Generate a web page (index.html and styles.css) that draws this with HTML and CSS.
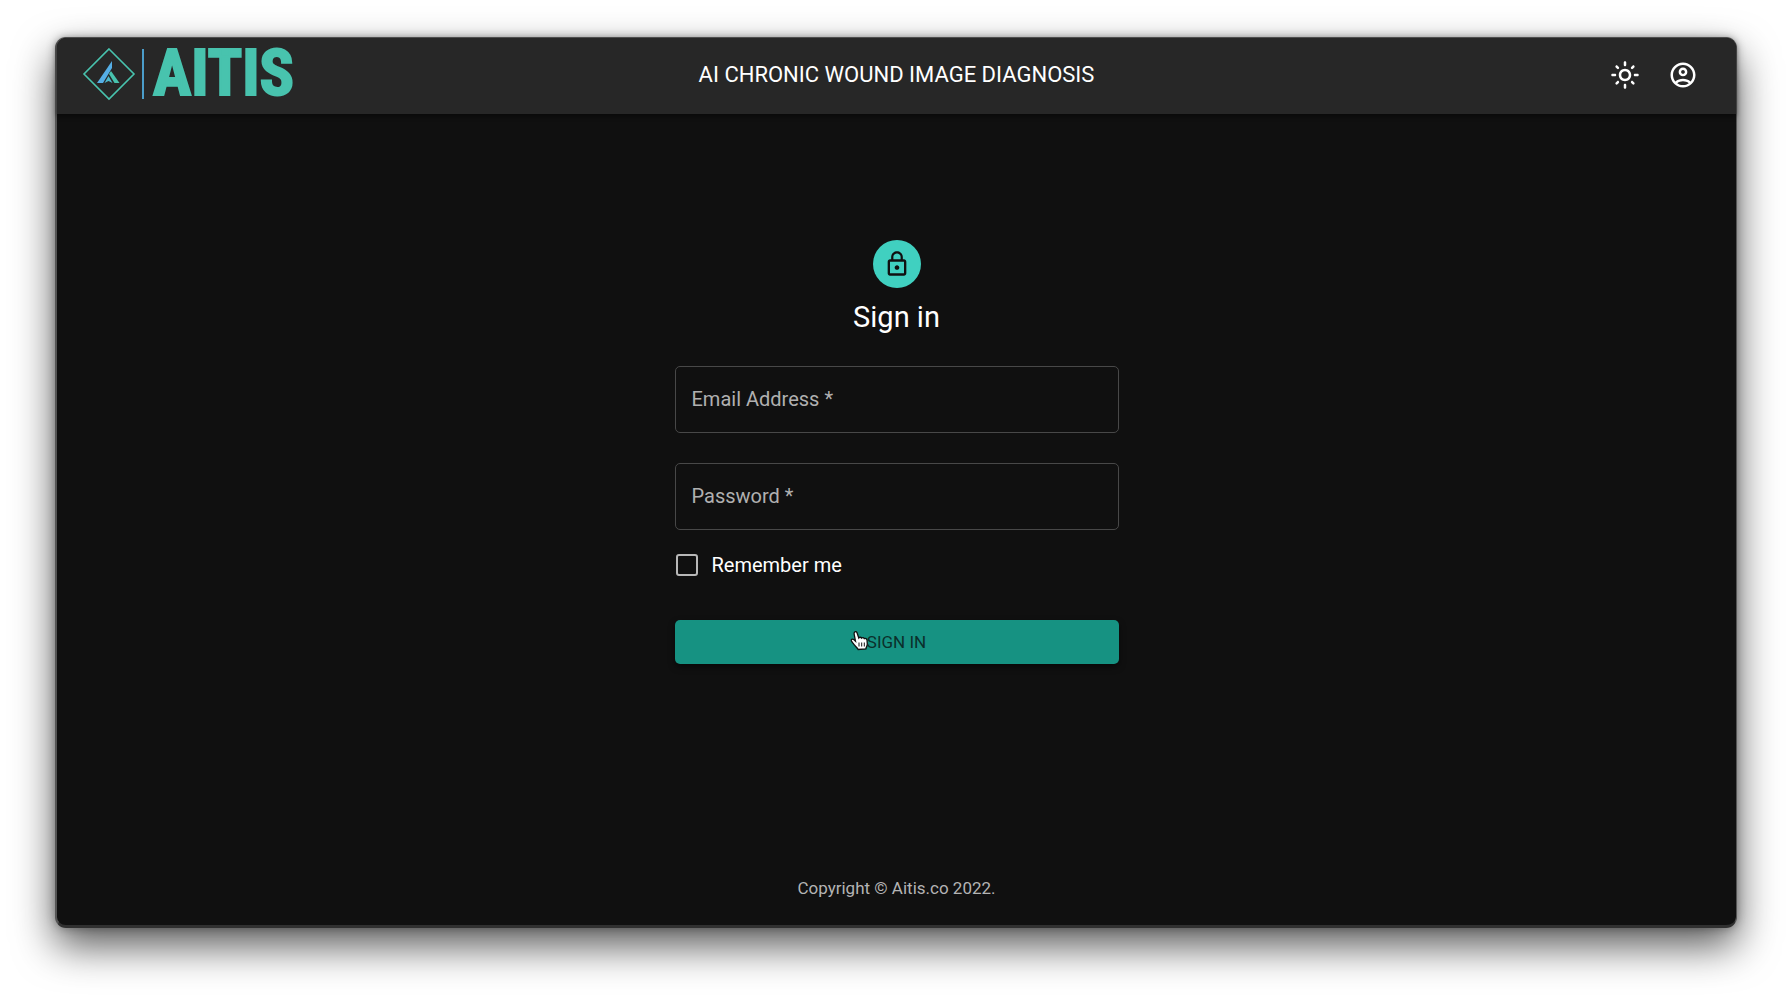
FILE: index.html
```html
<!DOCTYPE html>
<html lang="en">
<head>
<meta charset="utf-8">
<meta name="viewport" content="width=device-width, initial-scale=1">
<title>AI Chronic Wound Image Diagnosis</title>
<link rel="stylesheet" href="styles.css">
</head>
<body>
<div class="window">
  <header class="bar">
    <a class="brand" href="#" aria-label="AITIS home">
      <svg class="brand-mark" viewBox="0 0 54 54" aria-hidden="true">
        <path d="M27 2 52 27 27 52 2 27Z" fill="none" stroke="#48c3ae" stroke-width="1.6"/>
        <path d="M30 14v7L21 36h-6Z" fill="#55aee6"/>
        <path d="M29 24 37.500 36H32.500L27 27Z" fill="#48c3ae"/>
        <path d="M26.500 29 30.500 36 26.500 34 22.500 36Z" fill="#4cb8cb"/>
      </svg>
      <span class="brand-rule"></span>
      <span class="brand-name">AITIS</span>
    </a>
    <h1 class="bar-title">AI CHRONIC WOUND IMAGE DIAGNOSIS</h1>
    <nav class="actions">
      <button class="icon-button" type="button" aria-label="Toggle theme">
        <svg viewBox="0 0 24 24" aria-hidden="true"><path d="M12 9c1.650 0 3 1.350 3 3s-1.350 3-3 3-3-1.350-3-3 1.350-3 3-3m0-2c-2.760 0-5 2.240-5 5s2.240 5 5 5 5-2.240 5-5-2.240-5-5-5zM2 13h2c.55 0 1-.45 1-1s-.45-1-1-1H2c-.55 0-1 .45-1 1s.45 1 1 1zm18 0h2c.55 0 1-.45 1-1s-.45-1-1-1h-2c-.55 0-1 .45-1 1s.45 1 1 1zM11 2v2c0 .55.45 1 1 1s1-.45 1-1V2c0-.55-.45-1-1-1s-1 .45-1 1zm0 18v2c0 .55.45 1 1 1s1-.45 1-1v-2c0-.55-.45-1-1-1s-1 .45-1 1zM5.990 4.580c-.39-.39-1.030-.39-1.410 0-.39.39-.39 1.030 0 1.410l1.060 1.060c.39.39 1.030.39 1.410 0s.39-1.030 0-1.410L5.990 4.580zm12.370 12.370c-.39-.39-1.030-.39-1.410 0-.39.39-.39 1.030 0 1.410l1.060 1.060c.39.39 1.030.39 1.410 0 .39-.39.39-1.030 0-1.410l-1.060-1.060zm1.060-10.960c.39-.39.39-1.030 0-1.410-.39-.39-1.030-.39-1.410 0l-1.060 1.060c-.39.39-.39 1.030 0 1.410s1.030.39 1.410 0l1.060-1.060zM7.050 18.360c.39-.39.39-1.030 0-1.410-.39-.39-1.030-.39-1.410 0l-1.060 1.060c-.39.39-.39 1.030 0 1.410s1.030.39 1.410 0l1.060-1.060z"/></svg>
      </button>
      <button class="icon-button" type="button" aria-label="Account">
        <svg viewBox="0 0 24 24" aria-hidden="true"><path fill-rule="evenodd" d="M12 2C6.480 2 2 6.480 2 12s4.480 10 10 10 10-4.480 10-10S17.520 2 12 2zM7.350 18.500C8.660 17.560 10.260 17 12 17s3.340.56 4.650 1.500C15.340 19.440 13.740 20 12 20s-3.340-.56-4.650-1.500zm10.790-1.380C16.450 15.800 14.320 15 12 15s-4.450.8-6.140 2.120C4.700 15.730 4 13.950 4 12c0-4.420 3.580-8 8-8s8 3.580 8 8c0 1.950-.7 3.730-1.860 5.120zM12 6c-1.930 0-3.500 1.570-3.500 3.500S10.070 13 12 13s3.500-1.570 3.500-3.500S13.930 6 12 6zm0 5c-.83 0-1.500-.67-1.500-1.500S11.170 8 12 8s1.500.67 1.500 1.500S12.830 11 12 11z"/></svg>
      </button>
    </nav>
  </header>
  <main class="content">
    <span class="avatar">
      <svg viewBox="0 0 24 24" aria-hidden="true"><path fill-rule="evenodd" d="M12 17c1.100 0 2-.9 2-2s-.9-2-2-2-2 .9-2 2 .9 2 2 2zm6-9h-1V6c0-2.760-2.240-5-5-5S7 3.240 7 6v2H6c-1.100 0-2 .9-2 2v10c0 1.100.9 2 2 2h12c1.100 0 2-.9 2-2V10c0-1.100-.9-2-2-2zM8.900 6c0-1.710 1.390-3.100 3.100-3.100s3.100 1.390 3.100 3.100v2H8.900V6zM18 20H6V10h12v10z"/></svg>
    </span>
    <h2 class="heading">Sign in</h2>
    <form class="form">
      <input class="field" type="email" name="email" aria-label="Email Address" placeholder="Email Address *">
      <input class="field" type="password" name="password" aria-label="Password" placeholder="Password *">
      <label class="remember"><input class="checkbox" type="checkbox" name="remember">Remember me</label>
      <button class="submit" type="submit">SIGN IN
        <svg class="pointer" viewBox="0 0 20 22" aria-hidden="true"><path d="M4.500 2.200C5.300 1.300 6.600 1.600 7 2.800L8.800 8C9.500 7 11 7 11.600 8.100 12.500 7.300 13.800 7.600 14.300 8.600 15.500 8 16.800 8.700 17 10L17.300 14C17.300 16 16.200 16.800 15.900 18.800L8.200 19.500C7.200 17.300 4.500 15.800 3.100 13.300L1.500 11.100C.7 9.600 2.300 8.500 3.700 9.600L5.500 11.200 4.200 4.500C4 3.600 4 2.800 4.500 2.200Z" fill="#fff" stroke="#111" stroke-width="1.300"/><path d="M9 12.500V16.500M11.700 12.500V16.500M14.300 12.500V16.500" stroke="#111" stroke-width="1"/></svg>
      </button>
    </form>
  </main>
  <footer class="footer">Copyright © Aitis.co 2022.</footer>
</div>
</body>
</html>
```
FILE: styles.css
```css
* { box-sizing: border-box; }

body {
  margin: 0;
  min-height: 100vh;
  padding: 37px 55px 74px;
  display: flex;
  background: #fff;
  color: #fff;
  font-family: Roboto, "Liberation Sans", sans-serif;
}

.window {
  flex: 1;
  display: flex;
  flex-direction: column;
  border: 1px solid #555;
  border-left-width: 2px;
  border-bottom: 3px solid #303030;
  border-radius: 11px;
  background: #101010;
  box-shadow: 0 18px 40px rgba(0, 0, 0, .65), 0 0 10px rgba(0, 0, 0, .3);
}

.bar {
  display: grid;
  grid-template-columns: 1fr auto 1fr;
  align-items: center;
  height: 76px;
  padding: 0 29px 2px 25px;
  border-radius: 9px 9px 0 0;
  background: #272727;
  box-shadow: 0 2px 5px rgba(0, 0, 0, .5);
}

.brand {
  display: flex;
  align-items: center;
  height: 72px;
  color: #48c3ae;
  text-decoration: none;
}

.brand-mark { width: 54px; height: 54px; margin-bottom: 2px; }

.brand-rule {
  width: 2px;
  height: 50px;
  margin: 0 9px 2px 6px;
  background: #4b9dca;
}

.brand-name {
  margin-bottom: 2px;
  font: 700 64px/72px "Liberation Sans Narrow", "Roboto Condensed", Roboto, sans-serif;
  -webkit-text-stroke: 2px #48c3ae;
}

.bar-title {
  margin: 0;
  padding-left: 4px;
  font-size: 22px;
  font-weight: 400;
  line-height: 28px;
}

.actions { display: flex; justify-content: flex-end; gap: 10px; }

.icon-button {
  width: 48px;
  height: 48px;
  padding: 9px;
  border: 0;
  background: none;
  cursor: pointer;
}

.icon-button svg { display: block; width: 30px; height: 30px; fill: #fff; }

.content {
  flex: 1;
  display: flex;
  flex-direction: column;
  align-items: center;
  padding-top: 126px;
}

.avatar {
  display: grid;
  place-items: center;
  width: 48px;
  height: 48px;
  border-radius: 50%;
  background: #40d0c0;
}

.avatar svg { width: 28px; height: 28px; fill: #101010; }

.heading { margin: 10px 0 30px; font-size: 29px; font-weight: 400; line-height: 38px; }

.form { display: flex; flex-direction: column; width: 100%; max-width: 444px; }

.field {
  height: 67px;
  margin: 0 0 30px;
  padding: 0 16px 2px;
  border: 1px solid #484848;
  border-radius: 5px;
  background: transparent;
  color: #fff;
  font: 400 20px/28px Roboto, sans-serif;
}

.field + .remember { margin-top: -6px; }
.field::placeholder { color: #b0b0b0; opacity: 1; }

.remember {
  display: flex;
  align-items: center;
  align-self: flex-start;
  gap: 14px;
  padding-left: 1px;
  font-size: 20px;
  line-height: 22px;
}

.checkbox {
  appearance: none;
  width: 22px;
  height: 22px;
  margin: 0;
  border: 2px solid #b8b8b8;
  border-radius: 3px;
}

.checkbox:checked { background: #40d0c0; }

.submit {
  position: relative;
  height: 44px;
  margin-top: 44px;
  border: 0;
  border-radius: 5px;
  background: #169282;
  box-shadow: 0 3px 6px rgba(0, 0, 0, .5);
  color: #0b2f2b;
  font: 400 17px/28px Roboto, sans-serif;
  cursor: pointer;
}

.pointer {
  position: absolute;
  top: 10px;
  left: calc(50% - 47px);
  width: 20px;
  height: 22px;
}

.footer {
  padding-bottom: 24px;
  color: #b4b4b4;
  font-size: 17px;
  line-height: 26px;
  text-align: center;
}
```
